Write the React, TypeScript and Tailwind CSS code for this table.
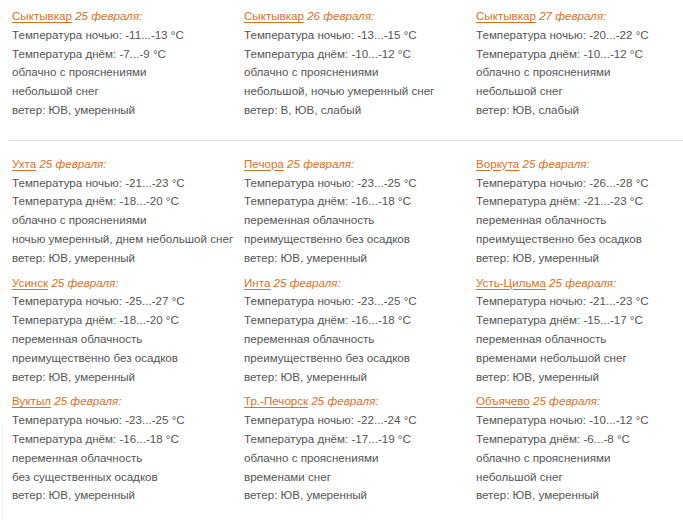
import React from "react";

type W = { city: string; date: string; lines: string[] };

const top: W[] = [
  { city: "Сыктывкар", date: "25 февраля:", lines: ["Температура ночью: -11...-13 °C", "Температура днём: -7...-9 °C", "облачно с прояснениями", "небольшой снег", "ветер: ЮВ, умеренный"] },
  { city: "Сыктывкар", date: "26 февраля:", lines: ["Температура ночью: -13...-15 °C", "Температура днём: -10...-12 °C", "облачно с прояснениями", "небольшой, ночью умеренный снег", "ветер: В, ЮВ, слабый"] },
  { city: "Сыктывкар", date: "27 февраля:", lines: ["Температура ночью: -20...-22 °C", "Температура днём: -10...-12 °C", "облачно с прояснениями", "небольшой снег", "ветер: ЮВ, слабый"] },
];

const rest: W[] = [
  { city: "Ухта", date: "25 февраля:", lines: ["Температура ночью: -21...-23 °C", "Температура днём: -18...-20 °C", "облачно с прояснениями", "ночью умеренный, днем небольшой снег", "ветер: ЮВ, умеренный"] },
  { city: "Печора", date: "25 февраля:", lines: ["Температура ночью: -23...-25 °C", "Температура днём: -16...-18 °C", "переменная облачность", "преимущественно без осадков", "ветер: ЮВ, умеренный"] },
  { city: "Воркута", date: "25 февраля:", lines: ["Температура ночью: -26...-28 °C", "Температура днём: -21...-23 °C", "переменная облачность", "преимущественно без осадков", "ветер: ЮВ, умеренный"] },
  { city: "Усинск", date: "25 февраля:", lines: ["Температура ночью: -25...-27 °C", "Температура днём: -18...-20 °C", "переменная облачность", "преимущественно без осадков", "ветер: ЮВ, умеренный"] },
  { city: "Инта", date: "25 февраля:", lines: ["Температура ночью: -23...-25 °C", "Температура днём: -16...-18 °C", "переменная облачность", "преимущественно без осадков", "ветер: ЮВ, умеренный"] },
  { city: "Усть-Цильма", date: "25 февраля:", lines: ["Температура ночью: -21...-23 °C", "Температура днём: -15...-17 °C", "переменная облачность", "временами небольшой снег", "ветер: ЮВ, умеренный"] },
  { city: "Вуктыл", date: "25 февраля:", lines: ["Температура ночью: -23...-25 °C", "Температура днём: -16...-18 °C", "переменная облачность", "без существенных осадков", "ветер: ЮВ, умеренный"] },
  { city: "Тр.-Печорск", date: "25 февраля:", lines: ["Температура ночью: -22...-24 °C", "Температура днём: -17...-19 °C", "облачно с прояснениями", "временами снег", "ветер: ЮВ, умеренный"] },
  { city: "Объячево", date: "25 февраля:", lines: ["Температура ночью: -10...-12 °C", "Температура днём: -6...-8 °C", "облачно с прояснениями", "небольшой снег", "ветер: ЮВ, умеренный"] },
];

function Block({ w }: { w: W }) {
  return (
    <div className="mb-[6px] whitespace-nowrap">
      <div className="text-[#e0701e]">
        <a href="#" className="underline underline-offset-[2px]">{w.city}</a>{" "}
        <i>{w.date}</i>
      </div>
      {w.lines.map((l, i) => (
        <div key={i}>{l}</div>
      ))}
    </div>
  );
}

export default function App() {
  return (
    <div
      className="relative w-[683px] h-[523px] overflow-hidden bg-white text-[11.6px] leading-[18.8px] text-[#555555]"
      style={{ fontFamily: '"Liberation Sans", Arial, sans-serif' }}
    >
      <div className="grid grid-cols-[232px_232px_219px] pl-3 pt-[7px]">
        {top.map((w, i) => (
          <Block key={i} w={w} />
        ))}
      </div>
      <div className="ml-[9px] mt-[14px] h-px bg-[#dddddd]" />
      <div className="grid grid-cols-[232px_232px_219px] pl-3 pt-[14px]">
        {rest.map((w, i) => (
          <Block key={i} w={w} />
        ))}
      </div>
      <div className="absolute left-[2px] top-[423px] h-[97px] w-px bg-[#eeeeee]" />
    </div>
  );
}
